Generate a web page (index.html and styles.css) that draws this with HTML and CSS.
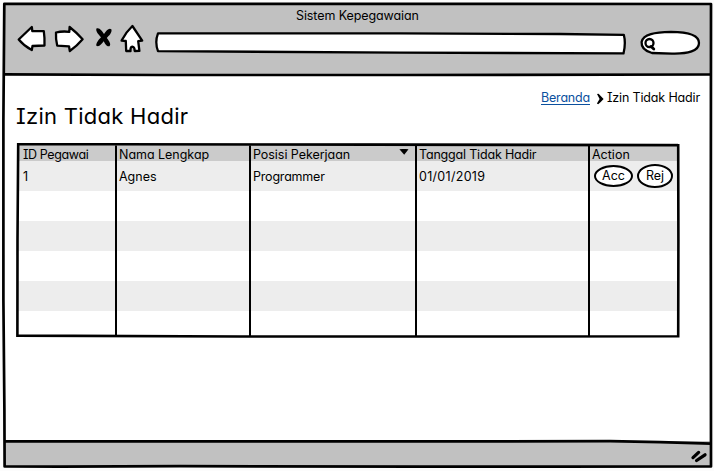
FILE: index.html
```html
<!DOCTYPE html>
<html lang="id">
<head>
<meta charset="utf-8">
<title>Sistem Kepegawaian</title>
<link rel="stylesheet" href="styles.css">
</head>
<body>
<div class="window">
  <header class="chrome">
    <div class="window-title"><span>Sistem Kepegawaian</span></div>
    <svg class="toolbar" viewBox="0 20 704 55" width="704" height="55">
      <g class="shape" transform="translate(-5 0)">
        <path d="M18.7 39.5L31.8 27L32.3 31L43.8 31.2Q44.8 38 44.5 45.5L32.5 46L31.8 50Q24 46 18.7 39.5Z"/>
        <path d="M56 32.5Q62 31 69.3 31.8L69.6 27Q76 32 82.6 39.3Q77 46 69.8 51L69 46.3L57.2 45.6Q55.6 39 56 32.5Z"/>
        <path d="M132.4 26L142.2 40.6L138.2 41.2L139.4 50.8L134.7 51Q134.6 46.8 132.3 46.7Q130.2 47 130.5 51L126.2 51L125.8 41L121.6 40.6Q126 32 132.4 26Z"/>
        <path d="M158 33.3L400 33.4L560 34L623.8 34.8Q626 43 623.5 53.4L400 52.6L158 51.2Q154.6 42 158 33.3Z"/>
        <path d="M641.6 42C643 34 655 32.3 671 31.9C686 32 699 34.5 699 43C699 51 688 54 672 53.6L652 53C645 51 641.2 47 641.6 42Z"/>
        <circle cx="649.5" cy="43" r="4"/>
        <path class="line" d="M651 46.4L653.8 49"/>
      </g>
      <path class="cross" transform="translate(-5 0)" d="M96.4 28.5C99.5 27 102 31 104 34C106.5 30.5 109 27.5 111.5 29.5C112 33 109 35.5 106.8 38C109 41 111.5 44 109.5 46.2C106.5 47 105 43.5 103.7 41.2C101.5 44 99 47.5 96.3 45.7C96 42.5 99 39.5 101 37.2C98.5 34.5 95.5 31.5 96.4 28.5Z"/>
    </svg>
  </header>

  <main class="page">
    <nav class="breadcrumb">
      <a class="crumb-link" href="#">Beranda</a>
      <svg class="chevron" width="8" height="12" viewBox="0 0 8 12"><path d="M1 1L2.6 .8L7.6 6Q5 9 2.2 11.2L.9 10.4L3.6 6Z"/></svg>
      <span class="crumb-current">Izin Tidak Hadir</span>
    </nav>
    <h1 class="heading"><span>Izin Tidak Hadir</span></h1>

    <section class="table">
      <div class="row head">
        <span><b class="t-id">ID Pegawai</b></span>
        <span><b class="t-name">Nama Lengkap</b></span>
        <span class="sorted"><b class="t-pos">Posisi Pekerjaan</b>
          <svg class="caret" width="10" height="6" viewBox="0 0 10 6"><path d="M.4 .3Q5 -.4 9.5 .3L5.2 5.7Z"/></svg></span>
        <span><b class="t-date">Tanggal Tidak Hadir</b></span>
        <span><b class="t-act">Action</b></span>
      </div>
      <div class="row data">
        <span>1</span>
        <span><b class="v-name">Agnes</b></span>
        <span><b class="v-pos">Programmer</b></span>
        <span><b class="v-date">01/01/2019</b></span>
        <span class="actions"><button class="pill acc">Acc</button><button class="pill rej">Rej</button></span>
      </div>
      <div class="row"></div>
      <div class="row"></div>
      <div class="row"></div>
      <div class="row"></div>
      <div class="row"></div>
      <svg class="rules" width="664" height="196" viewBox="16 142 664 196">
        <path class="thick" d="M18.2 144.2L120 144.3L370 144.6L678.2 145.3L678.4 240L678.2 336.3L440 336.5L240 336.5L17.4 335.6L17.5 240Z"/>
        <path d="M116 145.5V337M250 145.5V337M416 145.5V337M589 145.5V337"/>
      </svg>
    </section>
  </main>

  <footer class="status">
    <svg width="18" height="14" viewBox="0 0 18 14"><path class="grip" d="M3 8.6L8.6 3.4M6.6 11.5L15 5.8"/></svg>
  </footer>
</div>
<svg class="frame" width="714" height="471" viewBox="0 0 714 471">
  <path d="M4.3 3.9L711 4L710.8 240L711 466.5L560 466.7L420 466.7L180 466.2L60 466.7L4.6 466.4L4.4 410L3.4 300L3.4 120L4.3 3.9Z"/>
  <path d="M4.5 74.4L160 75L400 75L711 74.5M5 441.3L400 441.4L610 441.2Q660 441.8 711 443.6"/>
</svg>
</body>
</html>
```

FILE: styles.css
```css
* { box-sizing: border-box; }

body {
  margin: 0;
  width: 714px;
  height: 471px;
  overflow: hidden;
  background: #fcfcfc;
  color: #000;
  font-family: Inter, "Liberation Sans", sans-serif;
  font-size: 12.5px;
  line-height: 16px;
  font-feature-settings: "cv11" 1, "cv08" 1;
}

b { font-weight: 400; }

.window {
  display: flex;
  flex-direction: column;
  width: 706px;
  height: 463px;
  margin: 4px 0 0 4px;
  padding-left: 1px;
  background: #fff;
}

.chrome { height: 71px; margin-left: -1px; padding-left: 1px; background: #c1c1c1; }
.window-title { height: 16px; padding: 4px 0 0 291px; white-space: nowrap; letter-spacing: -.1px; }
.toolbar { display: block; }

.shape { fill: #fff; stroke: #000; stroke-width: 2.3; stroke-linejoin: round; stroke-linecap: round; }
.shape .line { stroke-width: 2.8; }
.cross { fill: #000; }

.page { flex: 1; padding: 15px 10px 0 11px; }

.breadcrumb { display: flex; justify-content: flex-end; height: 16px; white-space: nowrap; }
.crumb-link { height: 15px; color: #0b509e; text-decoration: none; border-bottom: 1px solid #0b509e; letter-spacing: -.2px; }
.crumb-current { letter-spacing: -.15px; }
.chevron { margin: 3px 3px 0 6px; }

.heading {
  height: 40px;
  margin: -3px 0 0;
  font-size: 22px;
  font-weight: 400;
  line-height: 26px;
  letter-spacing: .27px;
  white-space: nowrap;
}

.table { position: relative; width: 662px; height: 194px; padding-left: 2px; }
.row {
  display: grid;
  grid-template-columns: 98px 134px 166px 173px 89px;
  height: 30px;
  align-items: center;
  white-space: nowrap;
}
.row > span { padding-left: 3px; }
.row > span:first-child { padding-left: 5px; }
.row:nth-child(even) { background: #ededed; }
.row.head { height: 18px; padding-top: 4px; background: #cbcbcb; }
.row.data > span:not(.actions) { padding-top: 2px; }
.row:nth-child(7) { height: 24px; }

.t-id { letter-spacing: -.4px; }
.t-name { letter-spacing: -.03px; }
.t-pos { letter-spacing: -.05px; }
.t-date { letter-spacing: -.18px; }
.v-pos { letter-spacing: -.2px; }
.v-date { letter-spacing: .3px; }

.sorted { display: flex; align-items: center; justify-content: space-between; padding-right: 7px; }
.caret { margin-bottom: 6px; }
.rules { position: absolute; left: 0; top: -1px; fill: none; stroke: #000; stroke-width: 2; }
.rules .thick { stroke-width: 2.6; }

.row > .actions { display: flex; align-items: center; gap: 4px; padding-left: 5px; }
.pill {
  height: 22px;
  padding: 0;
  border: 2px solid #000;
  border-radius: 50%;
  background: #fff;
  color: #000;
  font: inherit;
  font-feature-settings: inherit;
}
.acc { width: 39px; }
.rej { width: 36px; height: 24px; }

.status { display: flex; justify-content: flex-end; align-items: center; height: 26px; margin-left: -1px; padding: 4px 2px 0 0; background: #c1c1c1; }
.grip { fill: none; stroke: #000; stroke-width: 3.3; stroke-linecap: round; }

.frame { position: absolute; left: 0; top: 0; pointer-events: none; fill: none; stroke: #000; stroke-width: 2.7; stroke-linejoin: round; }
```
